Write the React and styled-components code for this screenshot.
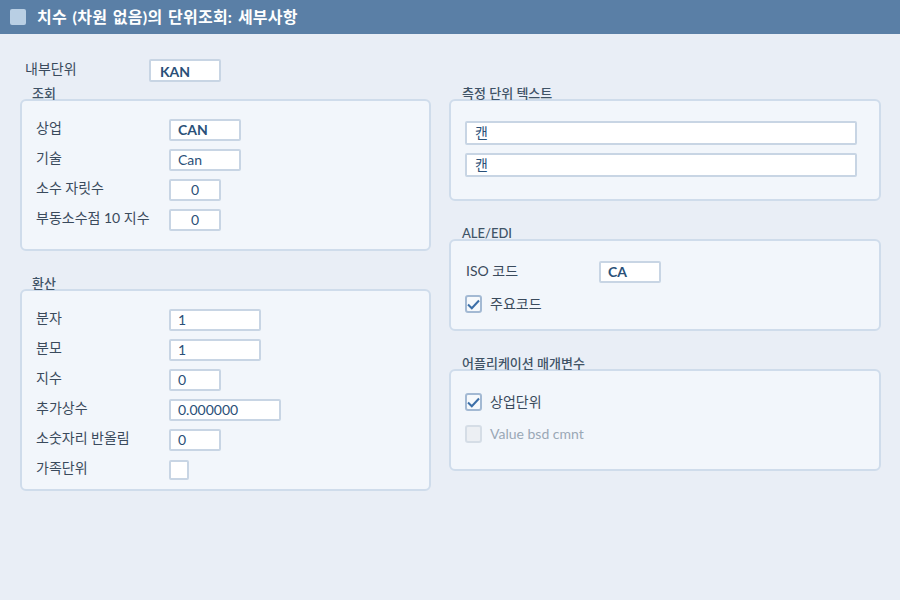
import React from "react";
import styled, { createGlobalStyle } from "styled-components";

const GlobalStyle = createGlobalStyle`
  html, body {
    margin: 0;
    height: 100%;
    background: #e9eef6;
    font-family: "Lato", "Noto Sans CJK KR", sans-serif;
    font-size: 14px;
    color: #3a4a5c;
  }
`;

const TitleBar = styled.div`
  height: 34px;
  background: #5a7fa6;
  display: flex;
  align-items: center;
  padding-left: 10px;
  gap: 11px;
`;

const TitleIcon = styled.span`
  width: 16px;
  height: 16px;
  border-radius: 2px;
  background: #b9cfe4;
`;

const TitleText = styled.span`
  color: #fff;
  font-size: 16px;
  font-weight: 700;
  letter-spacing: 0.25px;
  word-spacing: 1.5px;
  padding-bottom: 2px;
`;

const Columns = styled.div`
  display: grid;
  grid-template-columns: 411px 432px;
  column-gap: 18px;
  padding: 25px 0 0 20px;
`;

const Column = styled.div`
  display: flex;
  flex-direction: column;
  padding-top: ${(p) => p.$top || 0}px;
`;

const InnerUnit = styled.div`
  display: flex;
  align-items: center;
  height: 23px;
  padding-left: 5px;
  margin-bottom: 2px;
`;

const InnerLabel = styled.span`
  width: 124px;
  margin-top: -6px;
`;

const Group = styled.section`
  margin-bottom: ${(p) => p.$gap || 0}px;
`;

const GroupTitle = styled.h3`
  margin: 1px 0 -3px ${(p) => p.$indent || 12}px;
  font-size: 13px;
  line-height: 17px;
  font-weight: 500;
  color: #3f5366;
  position: relative;
`;

const Panel = styled.div`
  box-sizing: border-box;
  height: ${(p) => p.$height}px;
  background: #f2f6fb;
  border: 2px solid #cfdceb;
  border-radius: 6px;
  padding: ${(p) => p.$top}px 0 0 14px;
  display: flex;
  flex-direction: column;
  gap: ${(p) => p.$rowGap}px;
`;

const Row = styled.div`
  display: flex;
  align-items: center;
  height: 22px;
`;

const Label = styled.span`
  box-sizing: border-box;
  width: ${(p) => p.$width || 133}px;
  padding-left: ${(p) => p.$indent || 0}px;
  margin-top: ${(p) => p.$lift || -6}px;
  white-space: nowrap;
`;

const Field = styled.div`
  box-sizing: border-box;
  width: ${(p) => p.$width}px;
  height: ${(p) => p.$height || 22}px;
  background: #fff;
  border: 2px solid #c8d5e4;
  border-radius: 2px;
  display: flex;
  align-items: center;
  justify-content: ${(p) => (p.$center ? "center" : "flex-start")};
  padding-left: ${(p) => (p.$center ? 0 : p.$inset || 7)}px;
  padding-bottom: 2px;
  font-size: 14px;
  font-weight: ${(p) => (p.$bold ? 700 : 400)};
  color: #2a5078;
`;

const InnerField = styled(Field)`
  padding-bottom: 0;
  padding-top: 2px;
`;

const EmptyBox = styled.div`
  box-sizing: border-box;
  width: 20px;
  height: 20px;
  background: #fff;
  border: 2px solid #c8d5e4;
  border-radius: 2px;
`;

const CheckRow = styled.div`
  display: flex;
  align-items: center;
  gap: 8px;
  height: 18px;
  color: ${(p) => (p.$disabled ? "#9aa8b6" : "#3a4a5c")};
`;

const CheckLabel = styled.span`
  margin-top: -2px;
`;

const CheckBox = styled.span`
  box-sizing: border-box;
  width: 17px;
  height: 18px;
  border-radius: 3px;
  border: 2px solid ${(p) => (p.$disabled ? "#d5dde6" : "#a3b9d3")};
  background: ${(p) => (p.$disabled ? "#eceff3" : "#f6f9fc")};
  display: flex;
  align-items: center;
  justify-content: center;
`;

const Check = () => (
  <svg width="13" height="11" viewBox="0 0 13 11" fill="none">
    <path d="M1 5.5 L4.8 9.3 L12 1.5" stroke="#3c6fa8" strokeWidth="2" />
  </svg>
);

export default function App() {
  return (
    <>
      <GlobalStyle />
      <TitleBar>
        <TitleIcon />
        <TitleText>치수 (차원 없음)의 단위조회: 세부사항</TitleText>
      </TitleBar>
      <Columns>
        <Column>
          <InnerUnit>
            <InnerLabel>내부단위</InnerLabel>
            <InnerField $width={72} $height={23} $inset={9} $bold>KAN</InnerField>
          </InnerUnit>
          <Group $gap={23}>
            <GroupTitle>조회</GroupTitle>
            <Panel $height={152} $top={18} $rowGap={8}>
              <Row><Label>상업</Label><Field $width={72} $bold>CAN</Field></Row>
              <Row><Label>기술</Label><Field $width={72}>Can</Field></Row>
              <Row><Label>소수 자릿수</Label><Field $width={52} $center>0</Field></Row>
              <Row><Label>부동소수점 10 지수</Label><Field $width={52} $center>0</Field></Row>
            </Panel>
          </Group>
          <Group>
            <GroupTitle>환산</GroupTitle>
            <Panel $height={202} $top={18} $rowGap={8}>
              <Row><Label>분자</Label><Field $width={92}>1</Field></Row>
              <Row><Label>분모</Label><Field $width={92}>1</Field></Row>
              <Row><Label>지수</Label><Field $width={52}>0</Field></Row>
              <Row><Label>추가상수</Label><Field $width={112}>0.000000</Field></Row>
              <Row><Label>소숫자리 반올림</Label><Field $width={52}>0</Field></Row>
              <Row><Label>가족단위</Label><EmptyBox /></Row>
            </Panel>
          </Group>
        </Column>
        <Column $top={25}>
          <Group $gap={23}>
            <GroupTitle $indent={13}>측정 단위 텍스트</GroupTitle>
            <Panel $height={102} $top={20} $rowGap={8}>
              <Field $width={392} $height={24} $inset={8}>캔</Field>
              <Field $width={392} $height={24} $inset={8}>캔</Field>
            </Panel>
          </Group>
          <Group $gap={23}>
            <GroupTitle $indent={13}>ALE/EDI</GroupTitle>
            <Panel $height={92} $top={20} $rowGap={12}>
              <Row><Label $width={134} $indent={1} $lift={-4}>ISO 코드</Label><Field $width={62} $bold>CA</Field></Row>
              <CheckRow><CheckBox><Check /></CheckBox><CheckLabel>주요코드</CheckLabel></CheckRow>
            </Panel>
          </Group>
          <Group>
            <GroupTitle $indent={13}>어플리케이션 매개변수</GroupTitle>
            <Panel $height={102} $top={22} $rowGap={14}>
              <CheckRow><CheckBox><Check /></CheckBox><CheckLabel>상업단위</CheckLabel></CheckRow>
              <CheckRow $disabled><CheckBox $disabled /><CheckLabel>Value bsd cmnt</CheckLabel></CheckRow>
            </Panel>
          </Group>
        </Column>
      </Columns>
    </>
  );
}
